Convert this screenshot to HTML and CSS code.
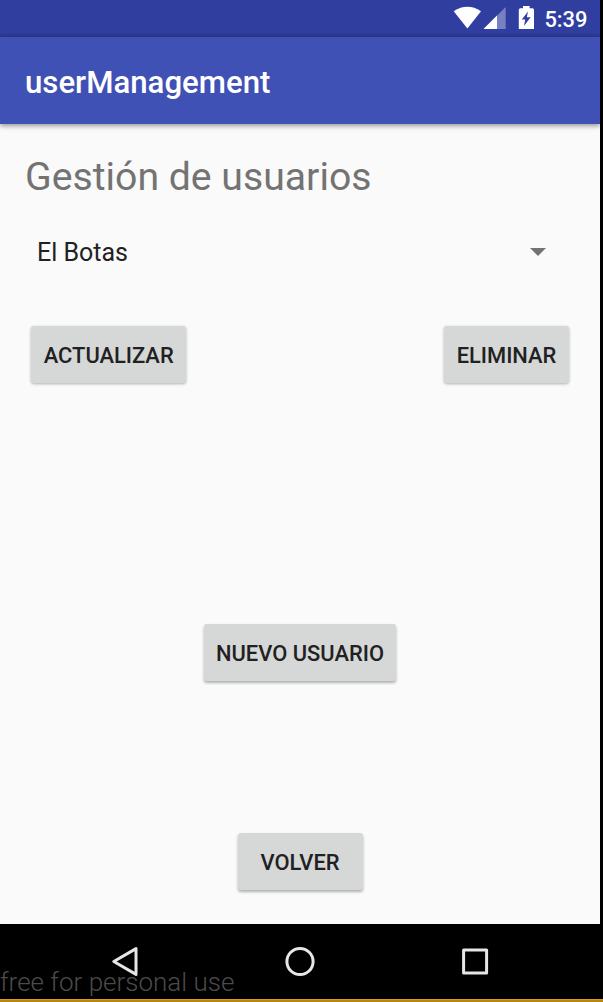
FILE: index.html
```html
<!DOCTYPE html>
<html lang="es">
<head>
<meta charset="utf-8">
<title>userManagement</title>
<link rel="stylesheet" href="styles.css">
</head>
<body>
<div class="device">
  <div class="screen">
    <div class="status-bar">
      <svg class="status-icons" width="90" height="36" viewBox="450 0 90 36">
        <path fill="#fff" d="M453.7 11.2Q467.4 2.4 481 11.2L467.4 28.4Z"/>
        <path fill="#7880c3" d="M483.5 29L505.7 7V29Z"/>
        <path fill="#fff" d="M483.5 29L497 15.6V29Z"/>
        <path fill="#fff" fill-rule="evenodd" d="M523 6H529.6V8.3H532.4Q534 8.3 534 9.8V29H518.8V9.8Q518.8 8.3 520.4 8.3H523ZM528 11.5L521.8 19.4H525.2L524 26L530.6 17.3H526.8Z"/>
      </svg>
      <span class="clock">5:39</span>
    </div>
    <header class="app-bar"><h1 class="app-title">userManagement</h1></header>
    <main class="content">
      <h2 class="heading">Gestión de usuarios</h2>
      <div class="spinner">
        <span>El Botas</span>
        <svg width="16" height="8" viewBox="0 0 16 8"><path fill="#737373" d="M0 0H16L8 8Z"/></svg>
      </div>
      <div class="actions">
        <button class="button update">ACTUALIZAR</button>
        <button class="button delete">ELIMINAR</button>
      </div>
      <button class="button create">NUEVO USUARIO</button>
      <button class="button back">VOLVER</button>
    </main>
  </div>
  <nav class="nav-bar">
    <svg class="nav-icons" width="600" height="75" viewBox="0 924 600 75" fill="none" stroke="#e6e6e6" stroke-width="3" stroke-linejoin="round">
      <path d="M113.8 961.5L136 948.6V974.4Z"/>
      <circle cx="300" cy="961.5" r="13.1"/>
      <rect x="463.6" y="950" width="23" height="23"/>
    </svg>
    <span class="watermark">free for personal use</span>
  </nav>
  <div class="desktop-edge"></div>
</div>
</body>
</html>
```
FILE: styles.css
```css
* { box-sizing: border-box; }
body { margin: 0; background: #000; font-family: Roboto, sans-serif; }
.device { width: 603px; height: 1002px; display: flex; flex-direction: column; overflow: hidden; background: #000; }
.screen { width: 600px; height: 924px; display: flex; flex-direction: column; overflow: hidden; background: #fafafa; }
.status-bar { height: 37px; display: flex; justify-content: flex-end; padding-right: 12.5px; background: linear-gradient(#303f9f 32px, #2b388f 37px); color: #fff; }
.status-icons { margin-right: 4.5px; }
.clock { font-size: 21.9px; line-height: 39px; font-weight: 500; white-space: nowrap; }
.app-bar { height: 87px; padding: 0 25px; background: #3f51b5; box-shadow: 0 2px 5px rgba(0,0,0,.4); display: flex; align-items: center; }
.app-title { margin: 5px 0 0; font-size: 31.2px; line-height: 36px; font-weight: 500; color: #fff; }
.content { flex: 1; display: flex; flex-direction: column; }
.heading { margin: 29px 0 0 25px; font-size: 39.2px; line-height: 48px; font-weight: 400; color: #737373; white-space: nowrap; }
.spinner { height: 38px; margin: 32px 54.5px 0 37px; display: flex; align-items: center; justify-content: space-between; font-size: 25px; color: #212121; }
.actions { margin: 55px 31px 0; display: flex; justify-content: space-between; }
.button { height: 57px; flex: none; padding: 2px 0 0; border: 0; border-radius: 3px; background: #d6d7d7; color: #212121; font: 500 21.9px/26px Roboto, sans-serif; white-space: nowrap; box-shadow: 0 1px 3px rgba(0,0,0,.3); }
.update { width: 155.4px; }
.delete { width: 125px; }
.create { width: 192px; margin: 241px 0 0 204px; box-shadow: 0 2px 3px rgba(0,0,0,.3); }
.back { width: 125px; margin: 152px 0 0 237.5px; box-shadow: 0 2px 3px rgba(0,0,0,.3); }
.nav-bar { height: 75px; position: relative; }
.nav-icons { display: block; }
.watermark { position: absolute; left: 0; top: 42px; font-size: 26px; line-height: 32px; font-weight: 300; color: #4b4b4b; white-space: nowrap; }
.desktop-edge { height: 3px; background: #bd830f; border-top: 1px solid #d49a2a; }
```
